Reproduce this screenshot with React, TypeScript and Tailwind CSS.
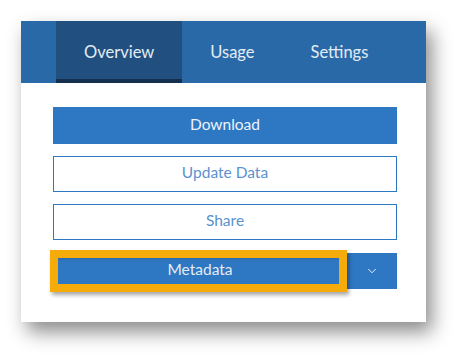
import { ChevronDown } from "lucide-react";

const tabs = ["Overview", "Usage", "Settings"];

export default function App() {
  return (
    <div
      className="w-[468px] h-[364px] bg-white pt-[21px] pl-[21px]"
      style={{ fontFamily: "Lato, 'Open Sans', sans-serif" }}
    >
      <div className="w-[405px] h-[301px] bg-white shadow-[6px_10px_18px_rgba(0,0,0,0.45)]">
        <div className="h-[62px] bg-[#2a69a8] flex pl-[35px]">
          {tabs.map((t, i) => (
            <div
              key={t}
              className={
                i === 0
                  ? "px-[28px] flex items-center bg-[#214f7f] border-b-4 border-[#15304f] pt-1 text-[16.5px] text-[#e3ecf5]"
                  : "px-[28px] flex items-center text-[16.5px] text-[#e3ecf5]"
              }
            >
              {t}
            </div>
          ))}
        </div>
        <div className="pl-[32px] pr-[29px] pt-[24px] flex flex-col gap-[12px]">
          <button className="h-[37px] w-full bg-[#2e77c2] text-[#eef3f9] text-[15.5px] pb-[2px]">
            Download
          </button>
          <button className="h-[36px] w-full border border-[#2e77c2] text-[#5a92d0] text-[15.5px] pb-[2px]">
            Update Data
          </button>
          <button className="h-[36px] w-full border border-[#2e77c2] text-[#5a92d0] text-[15.5px] pb-[2px]">
            Share
          </button>
          <div className="flex h-[36px] mt-[1px]">
            <div className="relative flex-1">
              <div className="h-full bg-[#2e77c2] flex items-center justify-center text-[#e3ecf5] text-[15.5px] pb-[2px] shadow-[inset_0_4px_4px_rgba(0,0,0,0.35)]">
                Metadata
              </div>
              <div className="absolute left-[-3px] top-[-3px] w-[297px] h-[42px] border-[8px] border-[#f5ab0a] shadow-[2px_3px_4px_rgba(0,0,0,0.35)]" />
            </div>
            <div className="w-[50px] bg-[#2e77c2] flex items-center justify-center">
              <ChevronDown size={14} strokeWidth={1.5} color="#ffffff" />
            </div>
          </div>
        </div>
      </div>
    </div>
  );
}
